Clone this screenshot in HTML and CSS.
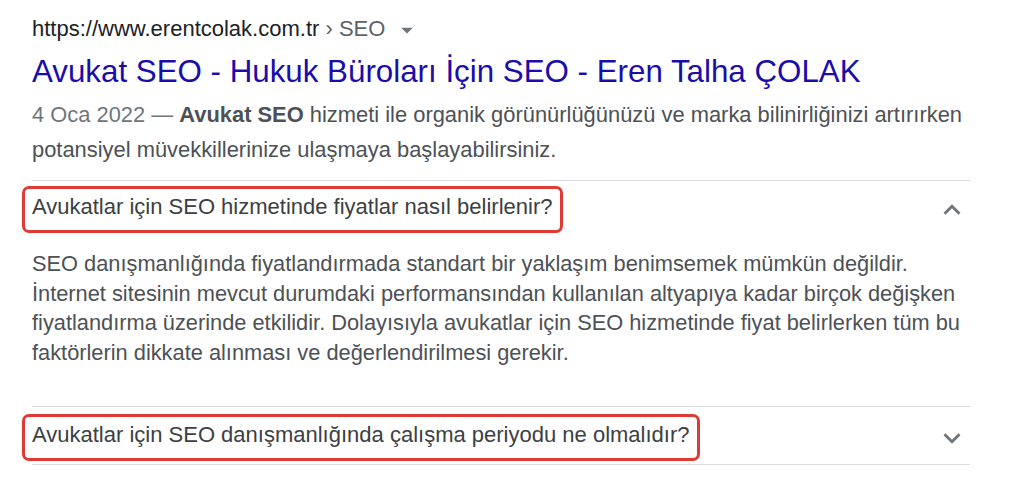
FILE: index.html
```html
<!DOCTYPE html>
<html lang="tr">
<head>
<meta charset="utf-8">
<title>Avukat SEO</title>
<link rel="stylesheet" href="styles.css">
</head>
<body>
<div class="result">
  <div class="url"><span class="host">https://www.erentcolak.com.tr</span><span class="crumb">&nbsp;›&nbsp;SEO</span><svg class="drop" viewBox="0 0 24 24" width="28" height="28"><path d="M7 10l5 5 5-5z"/></svg></div>
  <h3 class="title">Avukat SEO - Hukuk Büroları İçin SEO - Eren Talha ÇOLAK</h3>
  <p class="snippet"><span class="date">4 Oca 2022 — </span><b>Avukat SEO</b> hizmeti ile organik görünürlüğünüzü ve marka bilinirliğinizi artırırken potansiyel müvekkillerinize ulaşmaya başlayabilirsiniz.</p>
  <div class="faq">
    <div class="item open">
      <div class="q first">
        <span class="qbox">Avukatlar için SEO hizmetinde fiyatlar nasıl belirlenir?</span>
        <svg class="chev" viewBox="0 0 24 24" width="34" height="34"><path d="M7.41 15.41L12 10.83l4.59 4.58L18 14l-6-6-6 6z"/></svg>
      </div>
      <div class="a">SEO danışmanlığında fiyatlandırmada standart bir yaklaşım benimsemek mümkün değildir. İnternet sitesinin mevcut durumdaki performansından kullanılan altyapıya kadar birçok değişken fiyatlandırma üzerinde etkilidir. Dolayısıyla avukatlar için SEO hizmetinde fiyat belirlerken tüm bu faktörlerin dikkate alınması ve değerlendirilmesi gerekir.</div>
    </div>
    <div class="item">
      <div class="q second">
        <span class="qbox">Avukatlar için SEO danışmanlığında çalışma periyodu ne olmalıdır?</span>
        <svg class="chev" viewBox="0 0 24 24" width="34" height="34"><path d="M7.41 8.59L12 13.17l4.59-4.58L18 10l-6 6-6-6z"/></svg>
      </div>
    </div>
  </div>
</div>
</body>
</html>
```
FILE: styles.css
```css
html, body {
  margin: 0;
  padding: 0;
  background: #ffffff;
}
body {
  font-family: "Liberation Sans", Arial, Helvetica, sans-serif;
}
.result {
  width: 938px;
  padding: 14px 0 0 32px;
}
.url {
  display: flex;
  align-items: center;
  font-size: 22px;
  line-height: 30px;
  height: 30px;
  white-space: nowrap;
}
.host {
  color: #202124;
}
.crumb {
  color: #5f6368;
}
.drop {
  fill: #70757a;
  margin-left: 8px;
  margin-top: 2px;
}
.title {
  margin: 8px 0 0;
  font-weight: normal;
  font-size: 31.3px;
  line-height: 40px;
  color: #1a0dab;
  white-space: nowrap;
}
.snippet {
  margin: 5px 0 0;
  font-size: 21.9px;
  line-height: 35px;
  color: #4d5156;
}
.snippet b {
  color: #4d5156;
}
.date {
  color: #70757a;
}
.faq {
  margin-top: 13px;
  border-top: 1px solid #dadce0;
}
.item {
  border-bottom: 1px solid #dadce0;
}
.q {
  display: flex;
  align-items: center;
  justify-content: space-between;
}
.q.first {
  padding: 5px 0 1px;
}
.q.second {
  padding: 7px 0 3px;
}
.qbox {
  margin-left: -10px;
  padding: 0 7px 5px;
  border: 3px solid #df3b34;
  border-radius: 7px;
  font-size: 22px;
  line-height: 36px;
  color: #3c4043;
  white-space: nowrap;
}
.chev {
  fill: #70757a;
  margin-right: 1px;
}
.a {
  padding: 15px 0 39px;
  font-size: 21.8px;
  line-height: 29.5px;
  color: #4d5156;
}
```
